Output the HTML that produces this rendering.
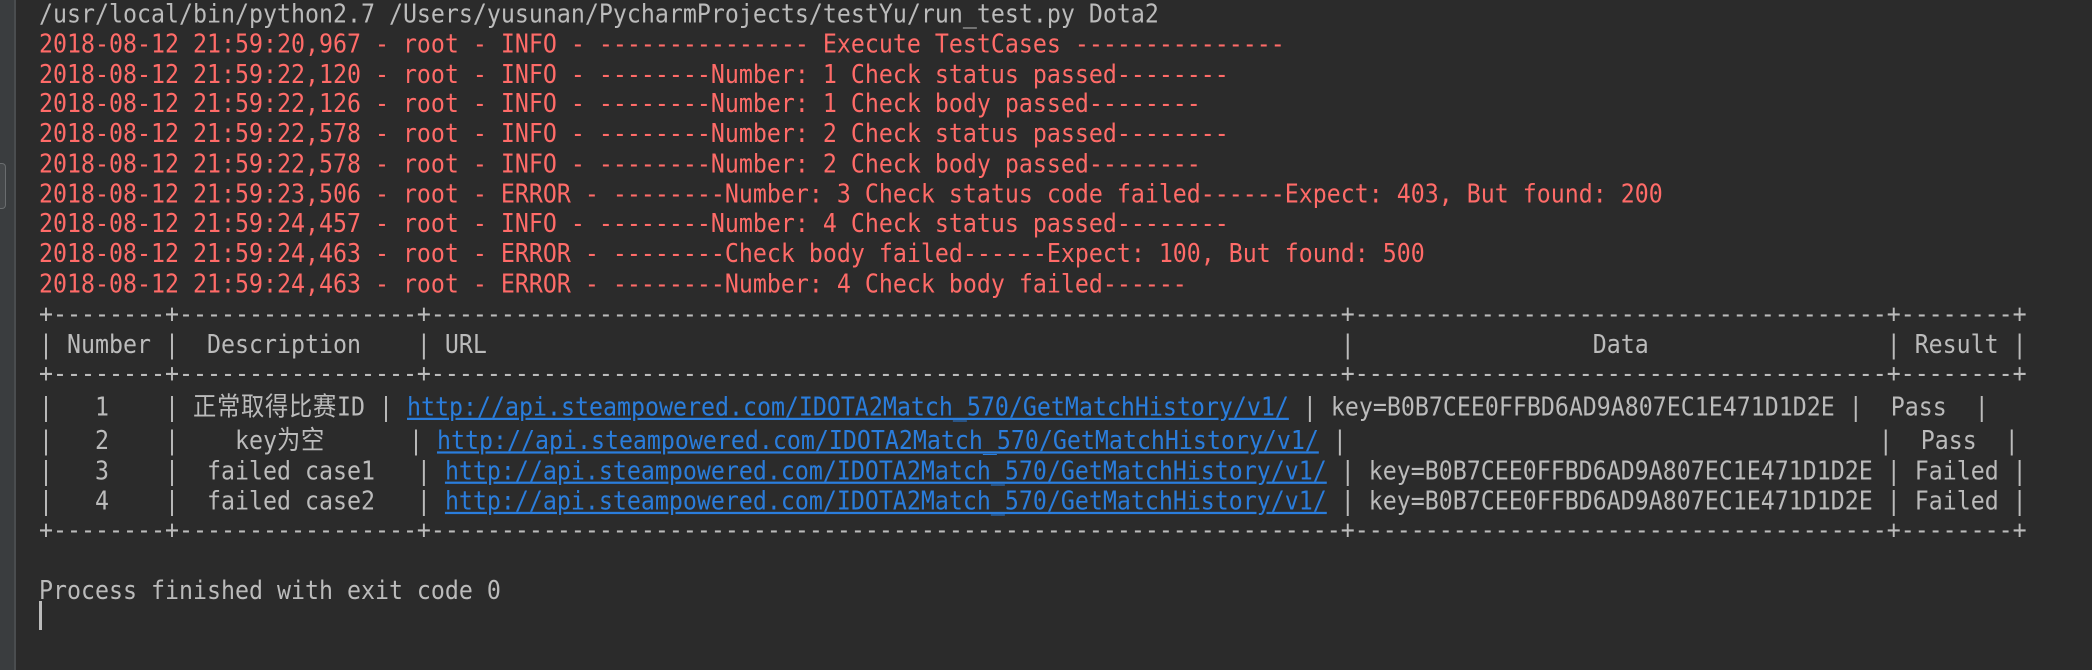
<!DOCTYPE html>
<html><head><meta charset="utf-8"><style>
html,body{margin:0;padding:0;background:#2b2b2b;width:2092px;height:670px;overflow:hidden}
.g{position:absolute;left:0;top:0;width:14px;height:670px;background:#3a3d3f;border-right:2px solid #4a4d4f}
.k{position:absolute;left:0;top:163px;width:5px;height:44px;border:1px solid #6a6d6f;border-left:none;border-radius:0 4px 4px 0;background:#45484a}
pre{position:absolute;left:39px;top:0;margin:0;font-family:"DejaVu Sans Mono","Liberation Mono",monospace;font-size:23.25px;line-height:26.7857px;color:#bbbbbb;white-space:pre;transform:scaleY(1.12);transform-origin:0 0}
.r{color:#ff6b68}
a{color:#2a7ddc;text-decoration:underline}
.c{font-family:"Noto Sans CJK SC",sans-serif;letter-spacing:0.75px}
.cur{position:absolute;left:39px;top:601px;width:3px;height:29px;background:#bbbbbb}
</style></head><body>
<div class="g"></div><div class="k"></div>
<pre>/usr/local/bin/python2.7 /Users/yusunan/PycharmProjects/testYu/run_test.py Dota2
<span class="r">2018-08-12 21:59:20,967 - root - INFO - --------------- Execute TestCases ---------------</span>
<span class="r">2018-08-12 21:59:22,120 - root - INFO - --------Number: 1 Check status passed--------</span>
<span class="r">2018-08-12 21:59:22,126 - root - INFO - --------Number: 1 Check body passed--------</span>
<span class="r">2018-08-12 21:59:22,578 - root - INFO - --------Number: 2 Check status passed--------</span>
<span class="r">2018-08-12 21:59:22,578 - root - INFO - --------Number: 2 Check body passed--------</span>
<span class="r">2018-08-12 21:59:23,506 - root - ERROR - --------Number: 3 Check status code failed------Expect: 403, But found: 200</span>
<span class="r">2018-08-12 21:59:24,457 - root - INFO - --------Number: 4 Check status passed--------</span>
<span class="r">2018-08-12 21:59:24,463 - root - ERROR - --------Check body failed------Expect: 100, But found: 500</span>
<span class="r">2018-08-12 21:59:24,463 - root - ERROR - --------Number: 4 Check body failed------</span>
+--------+-----------------+-----------------------------------------------------------------+--------------------------------------+--------+
| Number |  Description    | URL                                                             |                 Data                 | Result |
+--------+-----------------+-----------------------------------------------------------------+--------------------------------------+--------+
|   1    | <span class="c">正常取得比赛</span>ID | <a>http://api.steampowered.com/IDOTA2Match_570/GetMatchHistory/v1/</a> | key=B0B7CEE0FFBD6AD9A807EC1E471D1D2E |  Pass  |
|   2    |    key<span class="c">为空</span>      | <a>http://api.steampowered.com/IDOTA2Match_570/GetMatchHistory/v1/</a> |                                      |  Pass  |
|   3    |  failed case1   | <a>http://api.steampowered.com/IDOTA2Match_570/GetMatchHistory/v1/</a> | key=B0B7CEE0FFBD6AD9A807EC1E471D1D2E | Failed |
|   4    |  failed case2   | <a>http://api.steampowered.com/IDOTA2Match_570/GetMatchHistory/v1/</a> | key=B0B7CEE0FFBD6AD9A807EC1E471D1D2E | Failed |
+--------+-----------------+-----------------------------------------------------------------+--------------------------------------+--------+

Process finished with exit code 0</pre>
<div class="cur"></div>
</body></html>
